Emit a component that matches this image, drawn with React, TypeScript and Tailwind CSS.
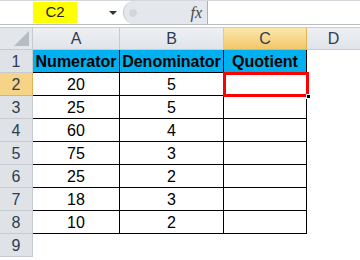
import React from "react";

const rows: [string, string][] = [
  ["20", "5"],
  ["25", "5"],
  ["60", "4"],
  ["75", "3"],
  ["25", "2"],
  ["18", "3"],
  ["10", "2"],
];

export default function App() {
  const font = { fontFamily: '"Liberation Sans", Arial, sans-serif' };
  return (
    <div className="w-[360px] h-[260px] bg-white overflow-hidden relative" style={font}>
      {/* formula bar */}
      <div className="flex h-[25px] border-t border-[#d5d8dc] border-b border-b-[#b9bec5]">
        <div className="w-[123px] flex items-center bg-white">
          <div className="ml-[33px] w-[44px] h-[21px] bg-[#ffff00] flex items-center justify-center text-[15px] text-[#222]">
            C2
          </div>
          <div className="ml-[32px] w-0 h-0 border-l-[4px] border-r-[4px] border-t-[4px] border-l-transparent border-r-transparent border-t-[#333]" />
        </div>
        <div className="w-[84px] h-full bg-[#e4e7eb] rounded-l-[12px] border-l border-[#c5c9cf] flex items-center">
          <div className="ml-[4px] w-[10px] h-[10px] rounded-full bg-[#d3d7dc] border border-[#e9ebee]" />
          <span className="ml-auto mr-[5px] text-[16px] italic text-[#444]" style={{ fontFamily: '"Liberation Serif", serif' }}>
            fx
          </span>
        </div>
        <div className="flex-1 bg-white border-l border-[#aab0b8]" />
      </div>
      <div className="h-[3px] bg-white border-b border-[#c9ced4]" />
      {/* grid */}
      <div
        className="relative grid"
        style={{ gridTemplateColumns: "33px 87px 104px 83px 53px", gridTemplateRows: "22px repeat(9, 23px)" }}
      >
        {/* header row */}
        <div className="bg-[#e3e6ea] border-r border-b border-[#c6cbd1] relative">
          <div className="absolute right-[3px] bottom-[3px]" style={{ borderRight: "15px solid #b7bcc3", borderTop: "15px solid transparent", width: 0, height: 0 }} />
        </div>
        {["A", "B"].map((c) => (
          <div key={c} className="bg-gradient-to-b from-[#eef0f3] to-[#e0e4e9] border-r border-b border-[#c6cbd1] flex items-center justify-center pt-[1px] text-[16px] text-[#2e3d50]">
            {c}
          </div>
        ))}
        <div className="bg-gradient-to-b from-[#fae7ad] to-[#f3c766] border-r border-b border-[#e3b253] flex items-center justify-center pt-[1px] text-[16px] text-[#2e3d50]">
          C
        </div>
        <div className="bg-gradient-to-b from-[#eef0f3] to-[#e0e4e9] border-b border-[#c6cbd1] flex items-center justify-center pt-[1px] text-[16px] text-[#2e3d50]">
          D
        </div>

        {/* row 1 */}
        <div className="bg-[#dfe3e8] border-r border-b border-[#c6cbd1] flex items-center justify-center pt-[1px] text-[16px] text-[#2e3d50]">1</div>
        {["Numerator", "Denominator", "Quotient"].map((h) => (
          <div key={h} className="bg-[#00b0f0] border-r border-b border-black flex items-center justify-center pt-[1px] text-[16px] font-bold text-black">
            {h}
          </div>
        ))}
        <div />

        {rows.map(([a, b], i) => {
          const n = i + 2;
          const active = n === 2;
          return (
            <React.Fragment key={n}>
              <div
                className={
                  active
                    ? "bg-[#f5d387] border-r border-b border-[#e3b253] flex items-center justify-center pt-[1px] text-[16px] text-[#2e3d50]"
                    : "bg-[#dfe3e8] border-r border-b border-[#c6cbd1] flex items-center justify-center pt-[1px] text-[16px] text-[#2e3d50]"
                }
              >
                {n}
              </div>
              <div className="border-r border-b border-black flex items-center justify-center pt-[1px] text-[16px] text-black">{a}</div>
              <div className="border-r border-b border-black flex items-center justify-center pt-[1px] text-[16px] text-black">{b}</div>
              <div className="border-r border-b border-black" />
              <div />
            </React.Fragment>
          );
        })}

        {/* row 9 */}
        <div className="bg-[#dfe3e8] border-r border-b border-[#c6cbd1] flex items-center justify-center pt-[1px] text-[16px] text-[#2e3d50]">9</div>
        <div />
        <div />
        <div />
        <div />

        {/* selection */}
        <div className="absolute left-[223px] top-[44px] w-[86px] h-[25px] border-[3px] border-[#ff0000]" />
        <div className="absolute left-[306px] top-[66px] w-[5px] h-[5px] bg-black border border-white" />
      </div>
    </div>
  );
}
